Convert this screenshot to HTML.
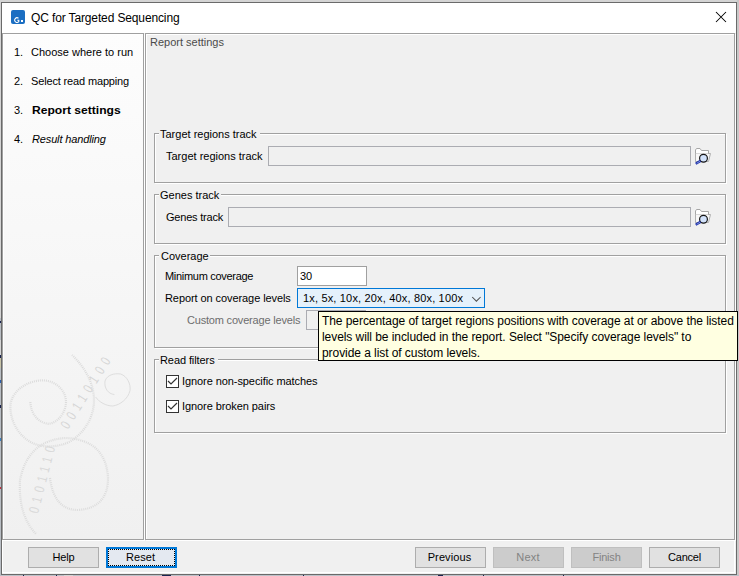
<!DOCTYPE html>
<html><head><meta charset="utf-8">
<style>
html,body{margin:0;padding:0;}
body{width:739px;height:576px;position:relative;overflow:hidden;background:#d4d4d4;font-family:"Liberation Sans",sans-serif;}
.a{position:absolute;}
.t{position:absolute;white-space:nowrap;font-size:11px;line-height:11px;color:#000;}
.etch{position:absolute;border:1px solid #a0a0a0;box-shadow:1px 1px 0 0 #fff, inset 1px 1px 0 0 #fff;}
.field{position:absolute;border:1px solid #abacb2;background:#f0f0f0;box-sizing:border-box;}
.btn{position:absolute;top:547px;width:71px;height:21px;box-sizing:border-box;border:1px solid #adadad;background:#e1e1e1;}
.btn span{position:absolute;left:0;right:0;text-align:center;top:4px;letter-spacing:-0.2px;font-size:11px;line-height:11px;}
.dis{background:#cccccc;border-color:#bfbfbf;color:#838383;}
.chk{position:absolute;left:166px;width:13px;height:13px;box-sizing:border-box;border:1px solid #333;background:#fff;}
</style></head><body>
<!-- outer screen pieces -->
<div class="a" style="left:737px;top:0;width:2px;height:576px;background:#c8c8c8"></div>
<div class="a" style="left:0;top:575px;width:739px;height:1px;background:#bcc1c8"></div><div class="a" style="left:64px;top:575px;width:9px;height:1px;background:#d4d4d4"></div><div class="a" style="left:23px;top:575px;width:1px;height:1px;background:#1a2450"></div><div class="a" style="left:56px;top:575px;width:1px;height:1px;background:#1a2450"></div><div class="a" style="left:162px;top:575px;width:9px;height:1px;background:#1a2450"></div><div class="a" style="left:199px;top:575px;width:1px;height:1px;background:#1a2450"></div><div class="a" style="left:303px;top:575px;width:1px;height:1px;background:#1a2450"></div><div class="a" style="left:438px;top:575px;width:5px;height:1px;background:#1a2450"></div><div class="a" style="left:483px;top:575px;width:1px;height:1px;background:#1a2450"></div><div class="a" style="left:563px;top:575px;width:1px;height:1px;background:#1a2450"></div>
<div class="a" style="left:0;top:318px;width:1px;height:258px;background:#b9bec4"></div><div class="a" style="left:0;top:340px;width:1px;height:15px;background:#d6d6d6"></div><div class="a" style="left:0;top:321px;width:1px;height:2px;background:#1a2450"></div><div class="a" style="left:0;top:355px;width:1px;height:3px;background:#1a2450"></div><div class="a" style="left:0;top:358px;width:1px;height:10px;background:#c8c4a8"></div><div class="a" style="left:0;top:380px;width:1px;height:3px;background:#2a60b0"></div><div class="a" style="left:0;top:405px;width:1px;height:3px;background:#1a2450"></div><div class="a" style="left:0;top:438px;width:1px;height:3px;background:#3a80c0"></div><div class="a" style="left:0;top:487px;width:1px;height:2px;background:#c03040"></div>
<!-- dialog frame -->
<div class="a" style="left:1px;top:2px;width:734px;height:571px;border:1px solid #6a6a6a;background:#f0f0f0"></div>
<div class="a" style="left:2px;top:3px;width:733px;height:570px;box-shadow:inset -1px -1px 0 0 #fff, inset 1px 0 0 0 #fff;"></div>
<!-- title bar -->
<div class="a" style="left:2px;top:3px;width:734px;height:30px;background:#fff"></div>
<div class="a" style="left:11px;top:10px;width:14px;height:14px;border-radius:2px;background:#1b6ec2"></div>
<svg class="a" style="left:11px;top:10px" width="14" height="14" viewBox="0 0 14 14">
  <path d="M7.5 8.3 A2.3 2.3 0 1 0 7.8 11.6 L7.8 10.2 L6.3 10.2" fill="none" stroke="#fff" stroke-width="1.1"/>
  <rect x="10" y="10" width="2" height="2" fill="#fff"/>
</svg>
<div class="t" style="left:31px;top:12px;font-size:12px;line-height:12px;letter-spacing:-0.13px">QC for Targeted Sequencing</div>
<svg class="a" style="left:715px;top:11px" width="12" height="12" viewBox="0 0 12 12">
  <path d="M1 1 L11 11 M11 1 L1 11" stroke="#000" stroke-width="1.05"/>
</svg>

<!-- left panel -->
<div class="etch" style="left:2px;top:33px;width:140px;height:505px;background:linear-gradient(#fdfdfd,#f0f0f0)"></div>
<svg class="a" style="left:0;top:0" width="145" height="545" viewBox="0 0 145 545">
 <g fill="none" stroke="#dcdcdc" stroke-width="2.2" stroke-dasharray="1 1">
  <path d="M30.4,402 C31,416 40,423 48.6,423.8 C58,423 66,412 66,402 C66,390 55,380 41.7,380.4 C25,381 10,393 10.4,407.3 C10.5,425 23,442 40,445.5 C52,448 66,445 74,439 C86,430 94,416 94,400 C94,385 86,368 72,355"/>
  <path d="M50,478 Q54,510 78,510 Q108,508 108,478 Q106,440 66,438 Q28,440 20,480 Q18,515 36,534"/>
 </g>
 <path d="M114.4,394.5 C108,394 104,388 105,381 C107,375 114,373 120.6,374 C127,376 131,384 130,390.6 C128,399 120,405 112.8,406 C106,406 99,402 95.6,397" fill="none" stroke="#dedede" stroke-width="1"/>
 <text x="0" y="0" font-family="Liberation Sans" font-size="14" fill="#d6d6d6" letter-spacing="6.75" transform="translate(67.9,430.1) rotate(-58) scale(0.75,1)">00110100</text>
 <text x="0" y="0" font-family="Liberation Sans" font-size="14" fill="#d9d9d9" letter-spacing="6.5" transform="translate(38,514) rotate(-75.5) scale(0.75,1)">0101110</text>
</svg>
<div class="t" style="left:14px;top:47px">1.</div><div class="t" style="left:31px;top:47px">Choose where to run</div>
<div class="t" style="left:14px;top:76px">2.</div><div class="t" style="left:31px;top:76px;letter-spacing:-0.15px">Select read mapping</div>
<div class="t" style="left:14px;top:105px">3.</div><div class="t" style="left:32px;top:105px;font-weight:bold;transform:scaleX(1.1);transform-origin:0 0">Report settings</div>
<div class="t" style="left:14px;top:134px">4.</div><div class="t" style="left:32px;top:134px;font-style:italic;letter-spacing:-0.14px">Result handling</div>

<!-- right panel -->
<div class="etch" style="left:145px;top:33px;width:588px;height:505px;background:#f0f0f0"></div>
<div class="t" style="left:150px;top:37px;color:#4a4a4a">Report settings</div>

<!-- target regions group -->
<div class="etch" style="left:154px;top:133px;width:570px;height:48px"></div>
<div class="a" style="left:159px;top:127px;width:101px;height:12px;background:#f0f0f0"></div>
<div class="t" style="left:160px;top:129px">Target regions track</div>
<div class="t" style="left:166px;top:151px">Target regions track</div>
<div class="field" style="left:268px;top:146px;width:423px;height:20px"></div>

<svg class="a" style="left:693px;top:146px" width="20" height="20" viewBox="0 0 20 20">
  <path d="M2.5 15.5 V4 L3.5 2.5 H7 L8.5 4.5 H15.5 V7.5" fill="#fff" stroke="#a6a6a6"/>
  <path d="M2.5 15.5 V7.5 H17.5 L15.5 15.5 Z" fill="#f7f7f7" stroke="#b0b0b0"/>
  <rect x="3" y="5" width="12" height="2.5" fill="#fff"/>
  <circle cx="10.5" cy="12.3" r="3.9" fill="#d2e2fb" stroke="#151515" stroke-width="1.2"/>
  <path d="M7.5 14.9 L2.7 17.7" stroke="#1a2fa8" stroke-width="2.4"/>
  <path d="M7 15.3 L3.6 17.3" stroke="#a8b8f0" stroke-width="0.7"/>
</svg>
<!-- genes group -->
<div class="etch" style="left:154px;top:194px;width:570px;height:48px"></div>
<div class="a" style="left:159px;top:188px;width:62px;height:12px;background:#f0f0f0"></div>
<div class="t" style="left:160px;top:190px">Genes track</div>
<div class="t" style="left:166px;top:212px;letter-spacing:-0.2px">Genes track</div>
<div class="field" style="left:228px;top:207px;width:463px;height:20px"></div>

<svg class="a" style="left:693px;top:207px" width="20" height="20" viewBox="0 0 20 20">
  <path d="M2.5 15.5 V4 L3.5 2.5 H7 L8.5 4.5 H15.5 V7.5" fill="#fff" stroke="#a6a6a6"/>
  <path d="M2.5 15.5 V7.5 H17.5 L15.5 15.5 Z" fill="#f7f7f7" stroke="#b0b0b0"/>
  <rect x="3" y="5" width="12" height="2.5" fill="#fff"/>
  <circle cx="10.5" cy="12.3" r="3.9" fill="#d2e2fb" stroke="#151515" stroke-width="1.2"/>
  <path d="M7.5 14.9 L2.7 17.7" stroke="#1a2fa8" stroke-width="2.4"/>
  <path d="M7 15.3 L3.6 17.3" stroke="#a8b8f0" stroke-width="0.7"/>
</svg>
<!-- coverage group -->
<div class="etch" style="left:154px;top:255px;width:570px;height:91px"></div>
<div class="a" style="left:159px;top:249px;width:51px;height:12px;background:#f0f0f0"></div>
<div class="t" style="left:161px;top:251px">Coverage</div>
<div class="t" style="left:165px;top:271px;letter-spacing:-0.3px">Minimum coverage</div>
<div class="a" style="left:297px;top:266px;width:70px;height:20px;box-sizing:border-box;border:1px solid #a0a0a0;background:#fff"></div>
<div class="t" style="left:300px;top:271px">30</div>
<div class="t" style="left:165px;top:293px;letter-spacing:-0.08px">Report on coverage levels</div>
<div class="a" style="left:297px;top:288px;width:188px;height:20px;box-sizing:border-box;border:1px solid #0078d7;background:#e5f1fb"></div>
<div class="t" style="left:303px;top:293px;letter-spacing:0.17px">1x, 5x, 10x, 20x, 40x, 80x, 100x</div>
<svg class="a" style="left:471px;top:295px" width="11" height="8" viewBox="0 0 11 8"><path d="M1.2 2 L5.4 6.2 L9.6 2" fill="none" stroke="#505050" stroke-width="1.05"/></svg>
<div class="t" style="left:187px;top:315px;color:#6d6d6d;letter-spacing:-0.19px">Custom coverage levels</div>
<div class="field" style="left:306px;top:310px;width:60px;height:20px"></div>

<!-- read filters group -->
<div class="etch" style="left:154px;top:359px;width:570px;height:72px"></div>
<div class="a" style="left:159px;top:353px;width:59px;height:12px;background:#f0f0f0"></div>
<div class="t" style="left:160px;top:355px;letter-spacing:-0.09px">Read filters</div>
<div class="chk" style="top:375px"></div>
<svg class="a" style="left:166px;top:375px" width="13" height="13" viewBox="0 0 13 13"><path d="M2 6 L5 9 L11 3" fill="none" stroke="#333" stroke-width="1.2"/></svg>
<div class="t" style="left:182px;top:376px;letter-spacing:-0.08px">Ignore non-specific matches</div>
<div class="chk" style="top:400px"></div>
<svg class="a" style="left:166px;top:400px" width="13" height="13" viewBox="0 0 13 13"><path d="M2 6 L5 9 L11 3" fill="none" stroke="#333" stroke-width="1.2"/></svg>
<div class="t" style="left:182px;top:401px;letter-spacing:-0.08px">Ignore broken pairs</div>

<!-- tooltip -->
<div class="a" style="left:318px;top:311px;width:418px;height:48px;border:1px solid #000;background:#ffffe1"></div>
<div class="t" style="left:322px;top:313px;font-size:12px;line-height:16px;letter-spacing:-0.065px">The percentage of target regions positions with coverage at or above the listed<br>levels will be included in the report. Select "Specify coverage levels" to<br>provide a list of custom levels.</div>

<!-- buttons -->
<div class="btn" style="left:28px"><span>Help</span></div>
<div class="btn" style="left:106px;border-color:#0078d7;background:#e4e9f1;box-shadow:inset 0 0 0 1px #0078d7"><div class="a" style="left:1px;top:1px;right:1px;bottom:1px;border:1px dotted #000"></div><span style="letter-spacing:0.1px;left:-2px">Reset</span></div>
<div class="btn" style="left:415px"><span style="letter-spacing:0.1px;left:-2px">Previous</span></div>
<div class="btn dis" style="left:493px"><span style="letter-spacing:0.2px;left:-1px">Next</span></div>
<div class="btn dis" style="left:571px"><span>Finish</span></div>
<div class="btn" style="left:649px"><span>Cancel</span></div>
</body></html>
